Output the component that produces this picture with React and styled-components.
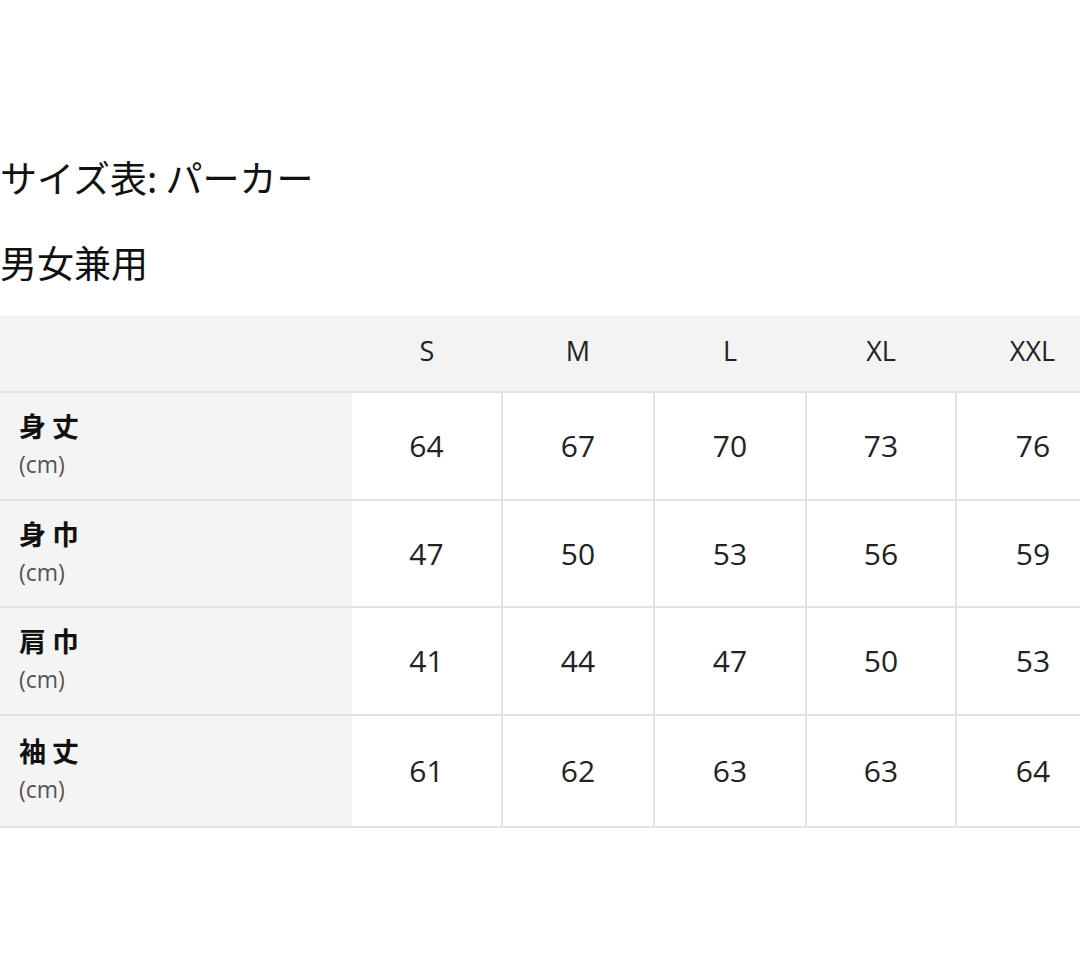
import React from 'react';
import styled, { createGlobalStyle } from 'styled-components';

const GlobalStyle = createGlobalStyle`
  html, body {
    margin: 0;
    padding: 0;
    background: #ffffff;
    overflow: hidden;
  }
  body {
    font-family: "Open Sans", "Noto Sans CJK JP", sans-serif;
    color: #111111;
  }
`;

const Page = styled.div`
  width: 1120px;
  padding-top: 154px;
`;

const Title = styled.h2`
  margin: 0;
  font-family: "Noto Sans CJK JP", sans-serif;
  font-weight: 400;
  font-size: 37px;
  line-height: 46px;
  color: #111111;
`;

const Subtitle = styled.p`
  margin: 39px 0 0;
  font-family: "Noto Sans CJK JP", sans-serif;
  font-size: 37px;
  line-height: 46px;
  color: #111111;
`;

const Table = styled.table`
  margin: 30px 0 0 -3px;
  width: 1112px;
  table-layout: fixed;
  border-collapse: collapse;
  border-bottom: 2px solid #e2e2e2;
`;

const HeadRow = styled.tr`
  background: #f3f3f3;
  height: 77px;
`;

const HeadCell = styled.th`
  font-weight: 400;
  font-size: 27px;
  color: #222222;
  text-align: center;
  padding: 0 0 6px;
`;

const BodyRow = styled.tr`
  height: ${(p) => p.$h}px;
  border-top: 2px solid #e2e2e2;
`;

const LabelCell = styled.td`
  background: #f4f4f4;
  padding: 6px 0 8px 22px;
  vertical-align: middle;
`;

const LabelName = styled.div`
  font-family: "Noto Sans CJK JP", sans-serif;
  font-weight: 700;
  font-size: 27px;
  letter-spacing: 6px;
  line-height: 38px;
  color: #111111;
`;

const Unit = styled.div`
  font-size: 23px;
  line-height: 38px;
  color: #555555;
`;

const ValueCell = styled.td`
  background: #ffffff;
  text-align: center;
  vertical-align: middle;
  font-size: 30px;
  color: #222222;
  padding-bottom: 2px;
  border-left: ${(p) => (p.$first ? 'none' : '2px solid #e2e2e2')};
`;

const sizes = ['S', 'M', 'L', 'XL', 'XXL'];
const widths = [150, 152, 152, 150, 153];

const rows = [
  { name: '身丈', values: [64, 67, 70, 73, 76], h: 108 },
  { name: '身巾', values: [47, 50, 53, 56, 59], h: 107 },
  { name: '肩巾', values: [41, 44, 47, 50, 53], h: 108 },
  { name: '袖丈', values: [61, 62, 63, 63, 64], h: 112 },
];

export default function App() {
  return (
    <Page>
      <GlobalStyle />
      <Title>サイズ表: パーカー</Title>
      <Subtitle>男女兼用</Subtitle>
      <Table>
        <colgroup>
          <col style={{ width: 355 }} />
          {sizes.map((s, i) => (
            <col key={s} style={{ width: widths[i] }} />
          ))}
        </colgroup>
        <thead>
          <HeadRow>
            <HeadCell />
            {sizes.map((s) => (
              <HeadCell key={s}>{s}</HeadCell>
            ))}
          </HeadRow>
        </thead>
        <tbody>
          {rows.map((r) => (
            <BodyRow key={r.name} $h={r.h}>
              <LabelCell>
                <LabelName>{r.name}</LabelName>
                <Unit>(cm)</Unit>
              </LabelCell>
              {r.values.map((v, i) => (
                <ValueCell key={i} $first={i === 0}>
                  {v}
                </ValueCell>
              ))}
            </BodyRow>
          ))}
        </tbody>
      </Table>
    </Page>
  );
}
